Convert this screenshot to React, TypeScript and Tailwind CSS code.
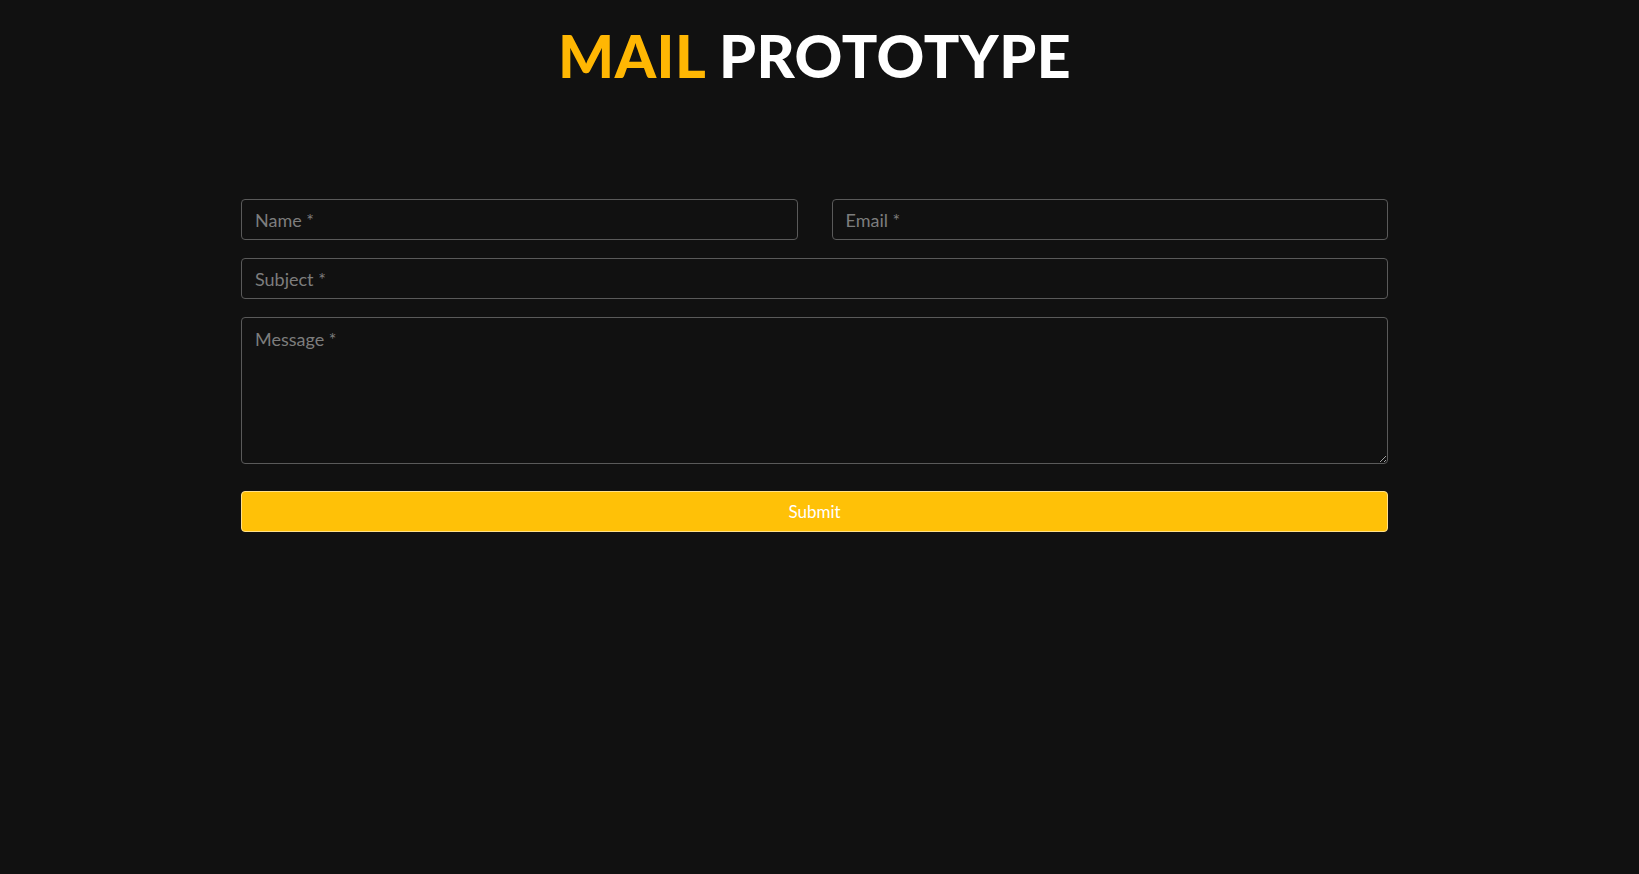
export default function App() {
  const field =
    "w-full h-[41px] rounded-[4px] border border-[#5a5a5a] bg-[#111111] px-[13px] text-[18px] text-[#dddddd] placeholder:text-[#7d7d7d] outline-none";

  return (
    <div className="min-h-[874px] bg-[#111111] font-['Lato',sans-serif]">
      <div className="ml-[241px] w-[1147px] pt-[20px]">
        <h1 className="text-center text-[59px] leading-[72px] font-black tracking-[0.5px]">
          <span className="text-[#ffb703]">MAIL</span>{" "}
          <span className="text-white">PROTOTYPE</span>
        </h1>

        <form className="mt-[107px] flex flex-col" onSubmit={(e) => e.preventDefault()}>
          <div className="grid grid-cols-2 gap-[34px]">
            <input className={field} placeholder="Name *" />
            <input className={field} placeholder="Email *" />
          </div>
          <input className={`${field} mt-[18px]`} placeholder="Subject *" />
          <textarea
            className={`${field} mt-[18px] h-[147px] py-[8px] resize-y`}
            placeholder="Message *"
          />
          <button
            type="submit"
            className="mt-[27px] h-[41px] w-full rounded-[4px] border border-[#ffe08a] bg-[#ffc107] text-[17px] text-white"
          >
            Submit
          </button>
        </form>
      </div>
    </div>
  );
}
